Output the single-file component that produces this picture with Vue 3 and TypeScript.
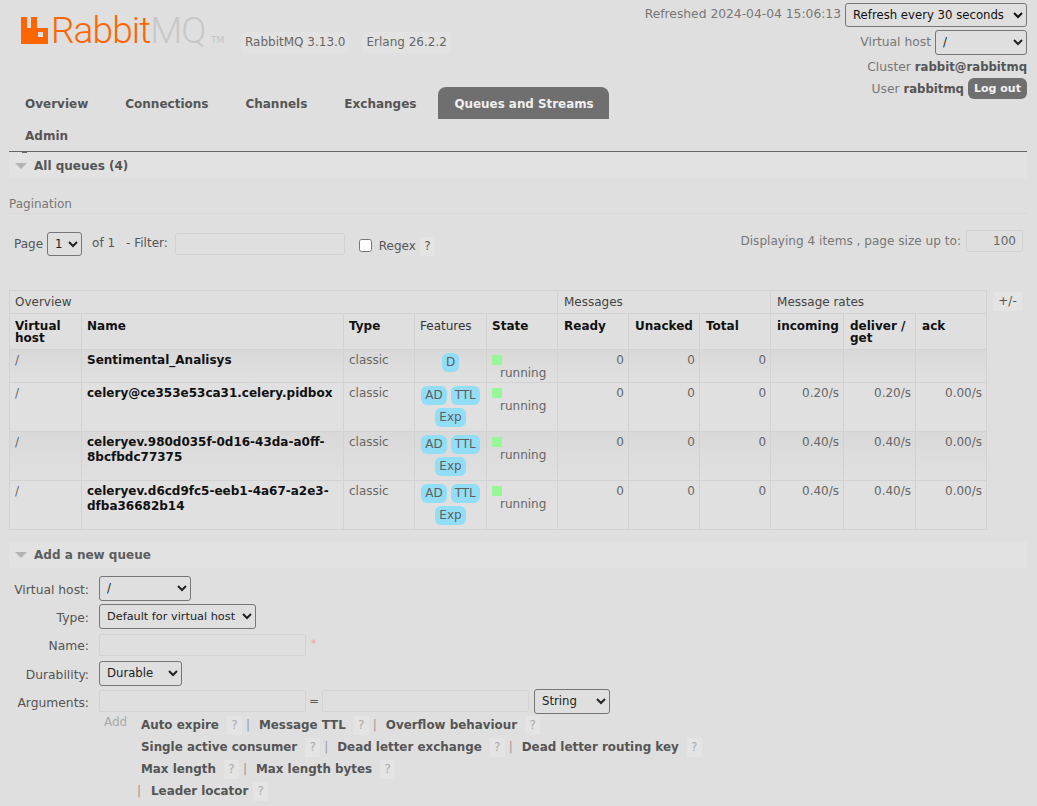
<script setup lang="ts">
interface Queue {
  name: string[]
  features: string[]
  rates: string[]
}

const tabs = ['Overview', 'Connections', 'Channels', 'Exchanges', 'Queues and Streams', 'Admin']

const queues: Queue[] = [
  { name: ['Sentimental_Analisys'], features: ['D'], rates: ['', '', ''] },
  {
    name: ['celery@ce353e53ca31.celery.pidbox'],
    features: ['AD', 'TTL', 'Exp'],
    rates: ['0.20/s', '0.20/s', '0.00/s']
  },
  {
    name: ['celeryev.980d035f-0d16-43da-a0ff-', '8bcfbdc77375'],
    features: ['AD', 'TTL', 'Exp'],
    rates: ['0.40/s', '0.40/s', '0.00/s']
  },
  {
    name: ['celeryev.d6cd9fc5-eeb1-4a67-a2e3-', 'dfba36682b14'],
    features: ['AD', 'TTL', 'Exp'],
    rates: ['0.40/s', '0.40/s', '0.00/s']
  }
]

const argRows = [
  { lead: false, items: ['Auto expire', 'Message TTL', 'Overflow behaviour'] },
  { lead: false, items: ['Single active consumer', 'Dead letter exchange', 'Dead letter routing key'] },
  { lead: false, items: ['Max length', 'Max length bytes'] },
  { lead: true, items: ['Leader locator'] }
]
</script>

<template>
  <div class="page">
    <header class="header">
      <div class="brand">
        <svg class="logo-mark" width="27" height="28" viewBox="0 0 27 28">
          <path
            fill="#ff6600"
            fill-rule="evenodd"
            d="M0 1h6v11h4V1h6v11h11v16H0z M17 16v5h5v-5z"
          />
        </svg>
        <span class="logo-text">Rabbit<span class="logo-mq">MQ</span></span>
        <span class="logo-tm">TM</span>
        <span class="version first">RabbitMQ 3.13.0</span>
        <span class="version">Erlang 26.2.2</span>
      </div>

      <div class="status">
        <div class="status-row top">
          <span>Refreshed 2024-04-04 15:06:13</span>
          <select class="refresh"><option>Refresh every 30 seconds</option></select>
        </div>
        <div class="status-row">
          <span>Virtual host</span>
          <select class="vhost"><option>/</option></select>
        </div>
        <div class="status-row line">
          <span class="nudge">Cluster <b>rabbit@rabbitmq</b></span>
        </div>
        <div class="status-row user">
          <span class="nudge">User <b>rabbitmq</b></span>
          <button class="logout">Log out</button>
        </div>
      </div>

      <nav class="tabs">
        <a v-for="t in tabs" :key="t" class="tab" :class="{ active: t === 'Queues and Streams' }">{{ t }}</a>
      </nav>
    </header>

    <main class="main">
      <h2 class="section-title first"><i class="arrow"></i>All queues (4)</h2>

      <div class="pagination-title">Pagination</div>
      <div class="pagination">
        <div class="pagination-left">
          <span class="page-label">Page</span>
          <select class="page-select"><option>1</option></select>
          <span class="of">of 1</span>
          <span class="filter-label">- Filter:</span>
          <input class="field filter" type="text" />
          <input class="regex-box" type="checkbox" />
          <span class="regex">Regex</span>
          <span class="help regex-help">?</span>
        </div>
        <div class="pagination-right">
          <span>Displaying 4 items , page size up to:</span>
          <input class="field page-size" type="text" value="100" />
        </div>
      </div>

      <div class="table-wrap">
        <table class="queues">
          <colgroup>
            <col style="width: 72px" />
            <col style="width: 262px" />
            <col style="width: 71px" />
            <col style="width: 72px" />
            <col style="width: 71px" />
            <col style="width: 71px" />
            <col style="width: 71px" />
            <col style="width: 71px" />
            <col style="width: 73px" />
            <col style="width: 72px" />
            <col style="width: 71px" />
          </colgroup>
          <thead>
            <tr class="group-row">
              <th colspan="5">Overview</th>
              <th colspan="3">Messages</th>
              <th colspan="3">Message rates</th>
            </tr>
            <tr class="head-row">
              <th>Virtual host</th>
              <th>Name</th>
              <th>Type</th>
              <th class="plain">Features</th>
              <th>State</th>
              <th>Ready</th>
              <th>Unacked</th>
              <th>Total</th>
              <th>incoming</th>
              <th>deliver / get</th>
              <th>ack</th>
            </tr>
          </thead>
          <tbody>
            <tr v-for="(q, i) in queues" :key="q.name[0]" :class="i % 2 === 0 ? 'odd' : 'even'" :style="{ height: i === 0 ? '33px' : '49px' }">
              <td>/</td>
              <td class="name"><div v-for="part in q.name" :key="part">{{ part }}</div></td>
              <td>classic</td>
              <td class="features">
                <div class="tags">
                  <span v-for="f in q.features" :key="f" class="tag">{{ f }}</span>
                </div>
              </td>
              <td class="state"><i class="state-dot"></i><div class="state-text">running</div></td>
              <td class="num">0</td>
              <td class="num">0</td>
              <td class="num">0</td>
              <td v-for="(r, n) in q.rates" :key="n" class="num">{{ r }}</td>
            </tr>
          </tbody>
        </table>
        <span class="columns-toggle">+/-</span>
      </div>

      <h2 class="section-title add"><i class="arrow"></i>Add a new queue</h2>

      <form class="form">
        <label class="form-label">Virtual host:</label>
        <div><select class="form-select s-vhost"><option>/</option></select></div>
        <label class="form-label">Type:</label>
        <div><select class="form-select s-type"><option>Default for virtual host</option></select></div>
        <label class="form-label">Name:</label>
        <div class="name-cell"><input class="field arg" type="text" /><span class="required">*</span></div>
        <label class="form-label">Durability:</label>
        <div><select class="form-select s-dur"><option>Durable</option></select></div>
        <label class="form-label">Arguments:</label>
        <div class="args-cell">
          <input class="field arg" type="text" />
          <span class="eq">=</span>
          <input class="field arg" type="text" />
          <select class="form-select s-str"><option>String</option></select>
        </div>
      </form>

      <div class="arg-help">
        <span class="add-link">Add</span>
        <div class="arg-links">
          <div v-for="(row, i) in argRows" :key="i" class="arg-row" :class="{ 'lead-row': row.lead }">
            <span v-if="row.lead" class="sep">|</span>
            <template v-for="(item, n) in row.items" :key="item">
              <span v-if="n > 0" class="sep">|</span>
              <b class="arg-link">{{ item }}</b>
              <span class="help">?</span>
            </template>
          </div>
        </div>
      </div>
    </main>
  </div>
</template>

<style>
html,
body {
  margin: 0;
  background: #dfdfdf;
}
</style>

<style scoped>
.page {
  width: 1037px;
  height: 806px;
  overflow: hidden;
  box-sizing: border-box;
  padding: 0 10px 0 9px;
  background: #dfdfdf;
  color: #5a5a5a;
  font: 12px/15px "DejaVu Sans", Verdana, sans-serif;
}

.header {
  display: grid;
  grid-template-columns: 1fr auto;
  grid-template-rows: 87px auto;
  border-bottom: 1px solid #666;
  height: 151px;
}

.brand {
  display: flex;
  align-items: flex-start;
  padding: 16px 0 0 12px;
}

.logo-mark {
  margin-right: 3px;
  flex: none;
}

.logo-text {
  font: 300 37px/30px Roboto, sans-serif;
  letter-spacing: -0.9px;
  color: #ff6600;
  width: 157px;
  flex: none;
}

.logo-mq {
  color: #c8c8c8;
}

.logo-tm {
  font: 9px/12px "DejaVu Sans", sans-serif;
  color: #c4c4c4;
  margin: 18px 0 0 3px;
  width: 18px;
  flex: none;
}

.version {
  margin-top: 16px;
  padding: 3px 4px;
  border-radius: 4px;
  background: #e2e2e2;
  color: #666;
  font-size: 12px;
  margin-left: 13px;
  flex: none;
}

.version.first {
  margin-left: 12px;
}

.status {
  grid-column: 2;
  grid-row: 1 / 3;
  display: flex;
  flex-direction: column;
  align-items: flex-end;
  color: #777;
  font-size: 12.3px;
}

.status b {
  color: #555;
  font-size: 11.7px;
}

.nudge {
  padding-top: 1px;
}

.status-row {
  display: flex;
  align-items: center;
  gap: 4px;
  height: 28px;
}

.status-row.top {
  padding-top: 1px;
  height: 27px;
}

.status-row.line {
  height: 22px;
}

.status-row.user {
  height: 21px;
}

select {
  font: 11.7px "DejaVu Sans", Verdana, sans-serif;
  color: #222;
  background-color: transparent;
  border: 1px solid #767676;
  border-radius: 3px;
  box-sizing: border-box;
  padding: 0 0 0 3px;
}

.refresh {
  width: 182px;
  height: 24px;
  color: #111;
}

.vhost {
  width: 92px;
  height: 25px;
}

.logout {
  background: #6f6f6f;
  color: #f2f2f2;
  border: 0;
  border-radius: 6px;
  height: 21px;
  width: 59px;
  padding: 0;
  font: bold 11px "DejaVu Sans", sans-serif;
}

.tabs {
  grid-column: 1;
  grid-row: 2;
  display: flex;
  flex-wrap: wrap;
}

.tab {
  height: 32px;
  line-height: 34px;
  padding: 0 16px;
  margin-right: 5px;
  font-weight: bold;
  font-size: 12px;
  color: #555;
  border-radius: 8px 8px 0 0;
  white-space: nowrap;
}

.tab.active {
  background: #6f6f6f;
  color: #f0f0f0;
  padding: 0 15px 0 16px;
  margin-left: 1px;
  font-size: 11.9px;
}

.section-title {
  display: flex;
  align-items: center;
  margin: 0;
  height: 26px;
  padding-left: 6px;
  background: #e2e2e2;
  font-size: 12px;
  font-weight: bold;
  color: #5c5c5c;
}

.section-title.first {
  position: relative;
  box-sizing: border-box;
  padding-top: 2px;
  color: #555;
}

.section-title.first::before {
  content: '';
  position: absolute;
  top: 0;
  left: 13px;
  width: 5px;
  height: 1px;
  background: #666;
}

.arrow {
  width: 0;
  height: 0;
  border-left: 6px solid transparent;
  border-right: 6px solid transparent;
  border-top: 6px solid #b3b3b3;
  margin-right: 7px;
}

.pagination-title {
  margin-top: 18px;
  padding-top: 1px;
  padding-bottom: 1px;
  border-bottom: 1px solid #d8d8d8;
  font-size: 12px;
  color: #777;
}

.pagination {
  display: flex;
  justify-content: space-between;
  align-items: flex-start;
  box-sizing: border-box;
  height: 76px;
  padding: 18px 4px 0 5px;
}

.pagination-left {
  display: flex;
  align-items: center;
  color: #555;
}

.page-label {
  margin-right: 4px;
}

.page-select {
  width: 35px;
  height: 24px;
}

.of {
  margin-left: 10px;
  margin-top: -2px;
}

.filter-label {
  margin-left: 11px;
  margin-right: 7px;
  margin-top: -2px;
}

.field {
  background: transparent;
  border: 1px solid #d3d3d3;
  border-radius: 2px;
  box-sizing: border-box;
  font: 12px "DejaVu Sans", sans-serif;
  color: #666;
  padding: 1px 6px;
  margin: 0;
}

.filter {
  width: 170px;
  height: 22px;
}

.regex-box {
  width: 13px;
  height: 13px;
  margin: 2px 0 0 14px;
}

.regex {
  margin: 4px 0 0 7px;
}

.help {
  display: inline-block;
  flex: none;
  width: 15px;
  height: 19px;
  line-height: 19px;
  text-align: center;
  background: #e4e4e4;
  color: #aaa;
  font-size: 12px;
}

.regex-help {
  margin: 4px 0 0 4px;
  color: #555;
}

.pagination-right {
  display: flex;
  align-items: center;
  gap: 5px;
  color: #777;
  font-size: 12.1px;
  margin-top: -2px;
}

.page-size {
  width: 57px;
  height: 22px;
  text-align: right;
}

.table-wrap {
  display: flex;
  align-items: flex-start;
  gap: 6px;
}

.queues {
  width: 978px;
  flex: none;
  table-layout: fixed;
  border-collapse: collapse;
  font-size: 12px;
  line-height: 12px;
}

.queues th,
.queues td {
  border: 1px solid #d2d2d2;
  padding: 5px 5px;
  text-align: left;
  vertical-align: top;
  box-sizing: border-box;
}

.group-row th {
  font-weight: normal;
  color: #444;
  height: 23px;
}

.group-row th:nth-child(n + 2),
.head-row th:nth-child(n + 6) {
  padding-left: 6px;
}

.head-row th {
  color: #111;
  font-weight: bold;
  height: 36px;
  padding-top: 6px;
}

.head-row th.plain {
  font-weight: normal;
  color: #333;
}

.odd {
  background: linear-gradient(#d9d9d9, #e0e0e0);
}

.even {
  background: #e0e0e0;
}

.queues td {
  color: #666;
  padding-top: 4px;
}

.queues td.name {
  font-weight: bold;
  color: #111;
  line-height: 15px;
  padding-top: 3px;
  padding-right: 0;
}

.queues td.features {
  padding: 3px 2px 0;
}

.tags {
  display: flex;
  flex-wrap: wrap;
  justify-content: center;
  gap: 3px 4px;
}

.tag {
  height: 19px;
  line-height: 19px;
  padding: 0 4px;
  border-radius: 6px;
  background: #92def6;
  color: #5e5e5e;
  font-size: 12px;
}

.queues td.state {
  padding: 5px 5px 0;
}

.state-dot {
  display: block;
  width: 10px;
  height: 10px;
  background: #98f898;
}

.state-text {
  padding-left: 8px;
  margin-top: 2px;
}

.queues td.num {
  text-align: right;
  padding-right: 4px;
}

.columns-toggle {
  width: 29px;
  height: 19px;
  line-height: 19px;
  margin-top: 2px;
  background: #e4e4e4;
  color: #555;
  text-align: center;
}

.section-title.add {
  margin-top: 12px;
}

.form {
  display: grid;
  grid-template-columns: 79px 1fr;
  grid-template-rows: 28px 28px 29px 28px 28px;
  column-gap: 11px;
  margin-top: 6px;
  align-items: center;
}

.form-label {
  text-align: right;
  color: #555;
  font-size: 12.3px;
  padding-top: 4px;
  margin-right: -1px;
}

.form-select {
  height: 25px;
  display: block;
}

.s-vhost {
  width: 92px;
}

.s-type {
  width: 157px;
  font-size: 11.3px;
}

.s-dur {
  width: 83px;
}

.s-str {
  width: 76px;
  margin-left: 5px;
}

.arg {
  width: 207px;
  height: 22px;
}

.name-cell {
  display: flex;
  align-items: flex-start;
}

.required {
  color: #f4a0a0;
  margin: 2px 0 0 5px;
  font-size: 11px;
}

.args-cell {
  display: flex;
  align-items: center;
}

.eq {
  width: 16px;
  text-align: center;
}

.arg-help {
  display: flex;
  margin-top: -1px;
  padding-left: 95px;
}

.add-link {
  width: 37px;
  color: #aaa;
  font-size: 12px;
  margin-top: 1px;
}

.arg-row {
  display: flex;
  align-items: center;
  height: 22px;
  color: #555;
}

.lead-row {
  margin-left: -5px;
}

.arg-link {
  font-size: 11.9px;
}

.arg-row .help {
  margin-left: 8px;
}

.lead-row .help {
  margin-left: 5px;
}

.sep {
  width: 6px;
  text-align: center;
  color: #999;
  margin: 0 8px 0 3px;
}

.lead-row .sep {
  margin-left: 0;
  margin-right: 9px;
}
</style>
